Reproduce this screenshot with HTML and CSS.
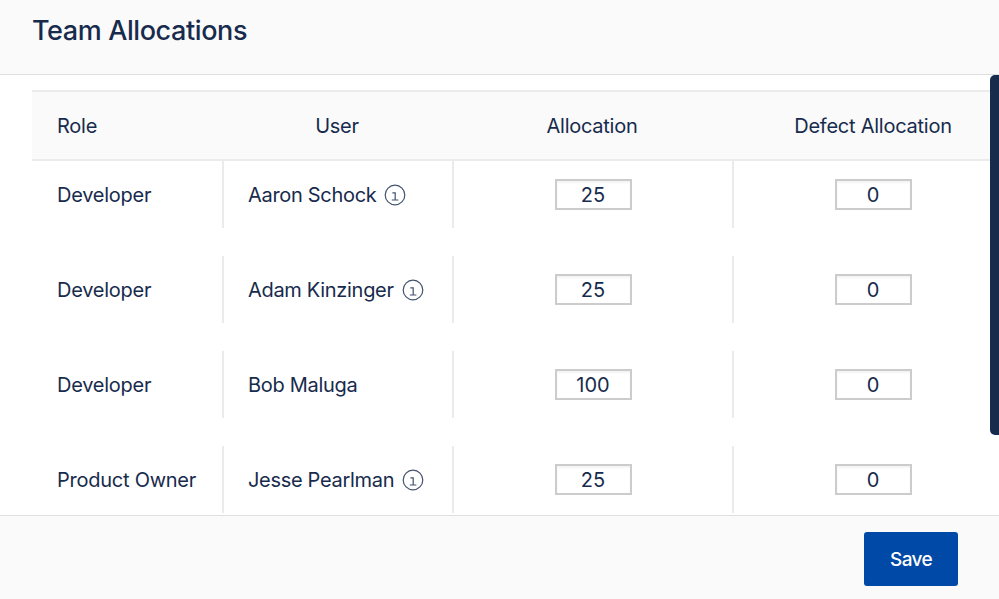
FILE: index.html
```html
<!DOCTYPE html>
<html lang="en">
<head>
    <meta charset="UTF-8">
    <title>Team Allocations</title>
    <link rel="stylesheet" href="styles.css">
</head>
<body>
    <header class="header">
        <h1>Team Allocations</h1>
    </header>

    <main class="content">
        <div class="table">
            <div class="row head">
                <div class="role">Role</div>
                <div>User</div>
                <div>Allocation</div>
                <div>Defect Allocation</div>
            </div>
            <div class="row">
                <div class="role">Developer</div>
                <div class="user">Aaron Schock
                    <svg class="info" viewBox="0 0 22 22"><circle cx="11" cy="11" r="9.8"/><path d="M8.4 8.8h2.8v7.2M7.8 16h6.6"/></svg>
                </div>
                <div><input type="text" value="25"></div>
                <div><input type="text" value="0"></div>
            </div>
            <div class="row">
                <div class="role">Developer</div>
                <div class="user">Adam Kinzinger
                    <svg class="info" viewBox="0 0 22 22"><circle cx="11" cy="11" r="9.8"/><path d="M8.4 8.8h2.8v7.2M7.8 16h6.6"/></svg>
                </div>
                <div><input type="text" value="25"></div>
                <div><input type="text" value="0"></div>
            </div>
            <div class="row">
                <div class="role">Developer</div>
                <div class="user">Bob Maluga</div>
                <div><input type="text" value="100"></div>
                <div><input type="text" value="0"></div>
            </div>
            <div class="row">
                <div class="role">Product Owner</div>
                <div class="user">Jesse Pearlman
                    <svg class="info" viewBox="0 0 22 22"><circle cx="11" cy="11" r="9.8"/><path d="M8.4 8.8h2.8v7.2M7.8 16h6.6"/></svg>
                </div>
                <div><input type="text" value="25"></div>
                <div><input type="text" value="0"></div>
            </div>
        </div>
        <div class="scrollbar"></div>
    </main>

    <footer class="footer">
        <button class="save">Save</button>
    </footer>
</body>
</html>
```

FILE: styles.css
```css
* { box-sizing: border-box; }
body { margin: 0; height: 599px; display: flex; flex-direction: column; overflow: hidden; background: #fff; color: #172b4d; font-family: Inter, "Liberation Sans", sans-serif; font-size: 20px; line-height: 24px; }

.header { height: 75px; padding: 15px 32px; background: #fafafa; border-bottom: 1px solid #dfdfdf; }
.header h1 { margin: 0; font-size: 27px; line-height: 32px; font-weight: 500; letter-spacing: -0.4px; }

.content { height: 440px; display: flex; overflow: hidden; }
.table { width: 958px; padding-top: 15px; margin-left: 32px; flex: none; overflow: hidden; }
.row { display: grid; grid-template-columns: 192px 230px 280px 280px; width: 982px; height: 67px; margin-bottom: 28px; letter-spacing: -0.25px; }
.row > div { display: flex; align-items: center; justify-content: center; border-right: 2px solid #ebebeb; }
.row > div:last-child { padding-right: 2px; border-right: none; }
.row > .role { justify-content: flex-start; padding-left: 25px; }
.row > .user { justify-content: flex-start; padding-left: 24px; letter-spacing: -0.31px; }

.head { height: 71px; margin-bottom: 0; background: #fafafa; border-top: 2px solid #ebebeb; border-bottom: 2px solid #ebebeb; }
.row.head > div { padding-right: 2px; border-right-color: transparent; }

input { width: 77px; height: 31px; padding: 0; border: 2px solid #ccc; border-radius: 0; background: #fff; box-shadow: inset 0 2px 2px #f4f4f4; color: #172b4d; font: inherit; text-align: center; }
.info { width: 22px; height: 22px; margin-left: 8px; fill: none; stroke: #42526e; stroke-width: 1.2; }

.scrollbar { width: 9px; height: 360px; background: #172b4d; border-radius: 5px 0 0 5px; }

.footer { height: 84px; display: flex; justify-content: flex-end; padding: 16px 41px 0 0; background: #fafafa; border-top: 1px solid #dfdfdf; }
.save { width: 94px; height: 54px; padding: 1px 0 0; border: none; border-radius: 3px; background: #0049a6; color: #fff; font: inherit; font-size: 19px; font-weight: 500; letter-spacing: -0.6px; }
```
